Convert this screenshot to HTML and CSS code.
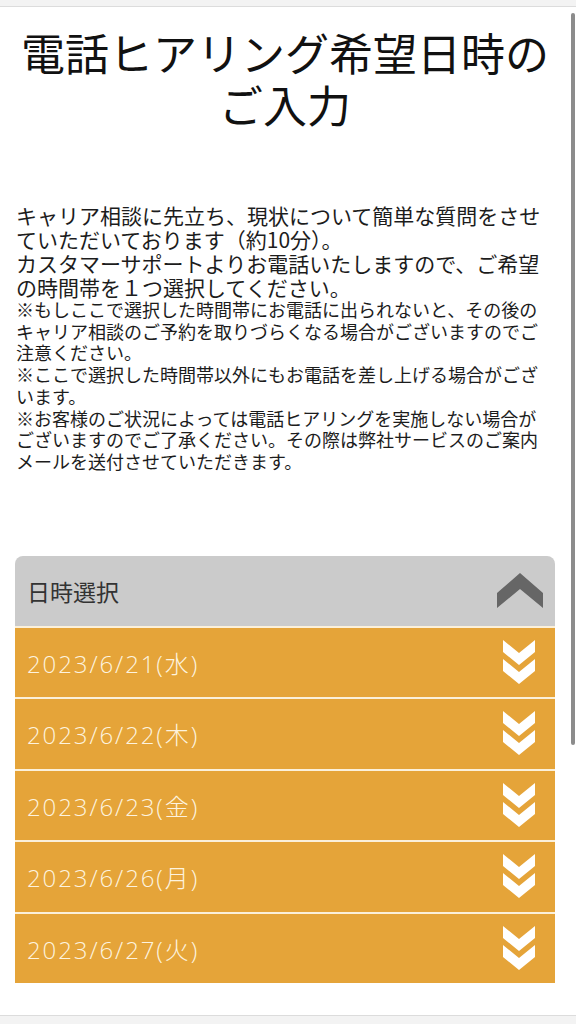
FILE: index.html
```html
<!DOCTYPE html>
<html lang="ja">
<head>
<meta charset="utf-8">
<title>電話ヒアリング希望日時のご入力</title>
<link rel="stylesheet" href="styles.css">
</head>
<body>
<div class="topbar"></div>
<main class="page">
  <h1 class="title">電話ヒアリング希望日時のご入力</h1>
  <div class="intro">
    <p class="lead">キャリア相談に先立ち、現状について簡単な質問をさせていただいております（約10分）。</p>
    <p class="lead">カスタマーサポートよりお電話いたしますので、ご希望の時間帯を１つ選択してください。</p>
    <p class="note">※もしここで選択した時間帯にお電話に出られないと、その後のキャリア相談のご予約を取りづらくなる場合がございますのでご注意ください。</p>
    <p class="note">※ここで選択した時間帯以外にもお電話を差し上げる場合がございます。</p>
    <p class="note">※お客様のご状況によっては電話ヒアリングを実施しない場合がございますのでご了承ください。その際は弊社サービスのご案内メールを送付させていただきます。</p>
  </div>
  <section class="accordion">
    <div class="acc-head">
      <span class="acc-title">日時選択</span>
      <svg class="icon-up" width="46" height="35" viewBox="0 0 46 35"><polygon points="0,20 23,0 46,20 46,35 23,16 0,35" fill="#666"/></svg>
    </div>
    <ul class="dates">
      <li class="date-row"><span>2023/6/21(水)</span><svg class="icon-down" width="32" height="45" viewBox="0 0 32 45"><polygon points="0,0 16,13 32,0 32,12 16,25 0,12" fill="#fff"/><polygon points="0,19 16,32 32,19 32,31 16,44 0,31" fill="#fff"/></svg></li>
      <li class="date-row"><span>2023/6/22(木)</span><svg class="icon-down" width="32" height="45" viewBox="0 0 32 45"><polygon points="0,0 16,13 32,0 32,12 16,25 0,12" fill="#fff"/><polygon points="0,19 16,32 32,19 32,31 16,44 0,31" fill="#fff"/></svg></li>
      <li class="date-row"><span>2023/6/23(金)</span><svg class="icon-down" width="32" height="45" viewBox="0 0 32 45"><polygon points="0,0 16,13 32,0 32,12 16,25 0,12" fill="#fff"/><polygon points="0,19 16,32 32,19 32,31 16,44 0,31" fill="#fff"/></svg></li>
      <li class="date-row"><span>2023/6/26(月)</span><svg class="icon-down" width="32" height="45" viewBox="0 0 32 45"><polygon points="0,0 16,13 32,0 32,12 16,25 0,12" fill="#fff"/><polygon points="0,19 16,32 32,19 32,31 16,44 0,31" fill="#fff"/></svg></li>
      <li class="date-row"><span>2023/6/27(火)</span><svg class="icon-down" width="32" height="45" viewBox="0 0 32 45"><polygon points="0,0 16,13 32,0 32,12 16,25 0,12" fill="#fff"/><polygon points="0,19 16,32 32,19 32,31 16,44 0,31" fill="#fff"/></svg></li>
    </ul>
  </section>
</main>
<div class="bottombar"></div>
<div class="scrollbar"></div>
</body>
</html>
```
FILE: styles.css
```css
* { box-sizing: border-box; }
html, body { margin: 0; padding: 0; }
body {
  width: 576px;
  height: 1024px;
  overflow: hidden;
  display: flex;
  flex-direction: column;
  background: #fff;
  font-family: "Noto Sans CJK JP", "Noto Sans", sans-serif;
  color: #111;
}
.topbar {
  height: 7px;
  flex: none;
  background: #f3f3f3;
  border-bottom: 1px solid #dcdcdc;
}
.page {
  flex: 1;
  padding: 0 21px 0 15px;
}
.title {
  margin: 19px 0 0;
  font-size: 44px;
  line-height: 52px;
  font-weight: 400;
  text-align: center;
  color: #111;
}
.intro {
  margin-top: 73px;
  padding: 0 4px 0 1px;
}
.intro p { margin: 0; }
.lead {
  font-size: 21px;
  line-height: 24px;
  color: #1c1c1c;
}
.note {
  font-size: 18px;
  line-height: 21.7px;
  color: #1c1c1c;
}
.accordion {
  margin-top: 83px;
}
.acc-head {
  height: 70px;
  background: #cbcbcb;
  border-radius: 8px 8px 0 0;
  display: flex;
  align-items: center;
  justify-content: space-between;
  padding: 0 12px 0 12px;
}
.acc-title {
  font-size: 23px;
  color: #333;
}
.icon-up { display: block; }
.dates {
  list-style: none;
  margin: 0;
  padding: 0;
}
.date-row {
  height: 71.5px;
  border-top: 2px solid #fbf0da;
  background: #e5a439;
  display: flex;
  align-items: center;
  justify-content: space-between;
  padding: 0 20px 0 12px;
  font-family: "Open Sans", "Noto Sans CJK JP", sans-serif;
  font-size: 24px;
  font-weight: 300;
  letter-spacing: 1.9px;
  color: #fdf3df;
}
.icon-down { display: block; }
.bottombar {
  height: 9px;
  flex: none;
  background: #f3f3f3;
  border-top: 1px solid #dcdcdc;
}
.scrollbar {
  position: absolute;
  left: 571px;
  top: 13px;
  width: 3.5px;
  height: 732px;
  background: #8c8c8c;
  border-radius: 2px;
}
```
